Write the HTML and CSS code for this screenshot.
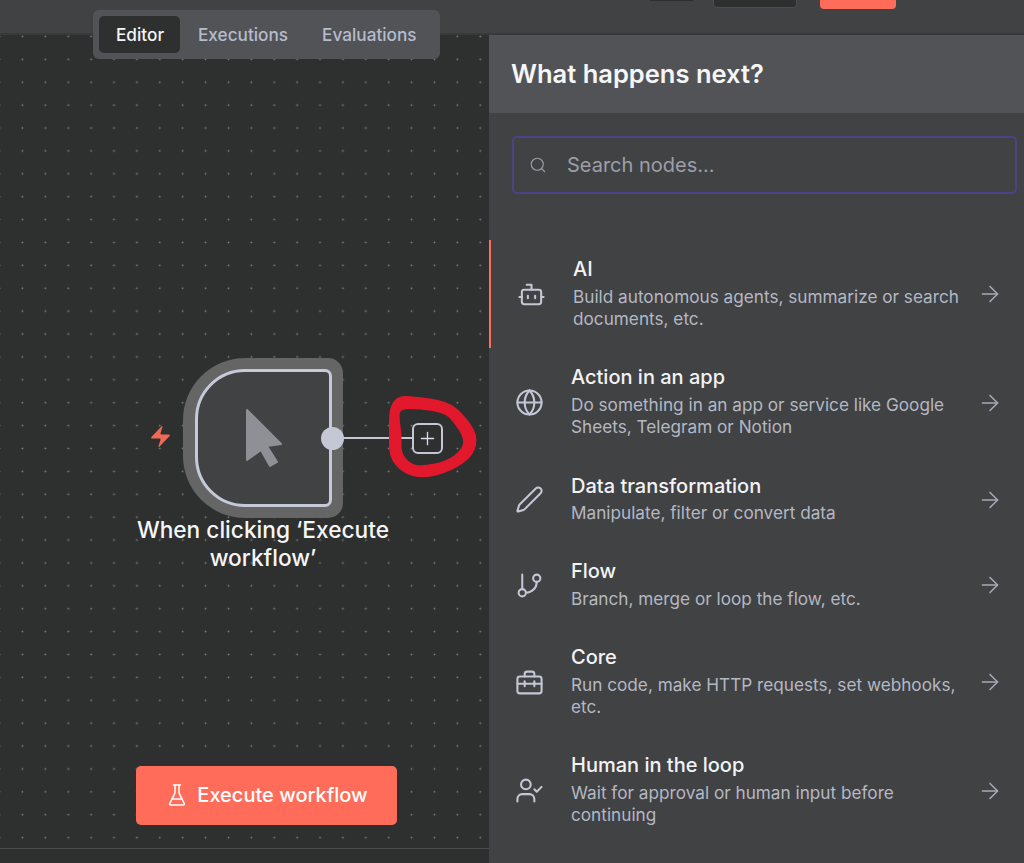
FILE: index.html
```html
<!DOCTYPE html>
<html lang="en">
<head>
    <meta charset="UTF-8">
    <meta name="viewport" content="width=device-width, initial-scale=1.0">
    <title>Workflow editor</title>
    <link rel="stylesheet" href="styles.css">
</head>
<body>
    <header class="topbar">
        <div class="topbar-actions">
            <span class="top-chip"></span>
            <span class="top-save"></span>
            <span class="top-publish"></span>
        </div>
    </header>

    <nav class="tabs">
        <span class="tab active">Editor</span>
        <span class="tab">Executions</span>
        <span class="tab">Evaluations</span>
    </nav>

    <main class="main">
        <section class="canvas-wrap">
            <div class="canvas">
                <svg class="wires" width="489" height="813" viewBox="0 35 489 813">
                    <path d="M332 438H413" class="wire"/>
                </svg>

                <svg class="trigger-bolt" viewBox="0 0 24 24">
                    <path d="M4 14a1 1 0 0 1-.78-1.63l9.9-10.2a.5.5 0 0 1 .86.46l-1.92 6.02A1 1 0 0 0 13 10h7a1 1 0 0 1 .78 1.63l-9.9 10.2a.5.5 0 0 1-.86-.46l1.92-6.02A1 1 0 0 0 11 14z"/>
                </svg>

                <div class="node-halo">
                    <div class="node">
                        <svg class="node-cursor" viewBox="0 0 36 58">
                            <path d="M1 1L35 35L21 37L31 53L24 57L15 41L1 51Z"/>
                        </svg>
                    </div>
                </div>
                <span class="node-port"></span>
                <span class="add-node">
                    <svg viewBox="0 0 24 24" class="icon"><path d="M5 12h14"/><path d="M12 5v14"/></svg>
                </span>
                <div class="node-label">When clicking ‘Execute workflow’</div>

                <!-- hand drawn red circle around the plus button -->
                <svg class="wires" width="489" height="813" viewBox="0 35 489 813">
                    <path class="scribble" fill-rule="evenodd" d="M405.5 397Q413 397 430 399.5Q447 402 455 408.5Q463 415 470 425Q477 435 475 445Q473 455 462.5 462.5Q452 470 437.5 474Q423 478 413 475Q403 472 396.5 464.5Q390 457 390 446Q390 435 390 421.5Q390 408 394 402.5Q398 397 405.5 397ZM410 408Q420 408 432.5 410Q445 412 450 417Q455 422 460 430Q465 438 464 444Q463 450 455 456Q447 462 435 464.5Q423 467 416.5 466Q410 465 405 459Q400 453 400.5 444Q401 435 399.5 426Q398 417 399 412.5Q400 408 410 408Z"/>
                </svg>

                <button class="execute-btn">
                    <svg viewBox="0 0 24 24" class="icon"><path d="M10 2v7.527a2 2 0 0 1-.211.896L4.72 20.55a1 1 0 0 0 .9 1.45h12.76a1 1 0 0 0 .9-1.45l-5.069-10.127A2 2 0 0 1 14 9.527V2"/><path d="M8.5 2h7"/><path d="M7 16h10"/></svg>
                    Execute workflow
                </button>
            </div>
            <div class="logs-bar"></div>
        </section>

        <aside class="panel">
            <div class="panel-head">What happens next?</div>
            <div class="search">
                <svg viewBox="0 0 24 24" class="icon search-icon"><path d="m21 21-4.34-4.34"/><circle cx="11" cy="11" r="8"/></svg>
                <span>Search nodes...</span>
            </div>

            <ul class="node-list">
                <li class="item selected">
                    <svg viewBox="0 0 24 24" class="icon item-icon"><path d="M12 8V4H8"/><rect width="16" height="12" x="4" y="8" rx="2"/><path d="M2 14h2"/><path d="M20 14h2"/><path d="M15 13v2"/><path d="M9 13v2"/></svg>
                    <div class="item-text">
                        <h4>AI</h4>
                        <p>Build autonomous agents, summarize or search documents, etc.</p>
                    </div>
                    <svg viewBox="0 0 24 24" class="icon item-arrow"><path d="M5 12h14"/><path d="m12 5 7 7-7 7"/></svg>
                </li>
                <li class="item">
                    <svg viewBox="0 0 24 24" class="icon item-icon"><circle cx="12" cy="12" r="10"/><path d="M12 2a14.5 14.5 0 0 0 0 20 14.5 14.5 0 0 0 0-20"/><path d="M2 12h20"/></svg>
                    <div class="item-text">
                        <h4>Action in an app</h4>
                        <p>Do something in an app or service like Google Sheets, Telegram or Notion</p>
                    </div>
                    <svg viewBox="0 0 24 24" class="icon item-arrow"><path d="M5 12h14"/><path d="m12 5 7 7-7 7"/></svg>
                </li>
                <li class="item">
                    <svg viewBox="0 0 24 24" class="icon item-icon"><path d="M21.174 6.812a1 1 0 0 0-3.986-3.987L3.842 16.174a2 2 0 0 0-.5.83l-1.321 4.352a.5.5 0 0 0 .623.622l4.353-1.32a2 2 0 0 0 .83-.497z"/></svg>
                    <div class="item-text">
                        <h4>Data transformation</h4>
                        <p>Manipulate, filter or convert data</p>
                    </div>
                    <svg viewBox="0 0 24 24" class="icon item-arrow"><path d="M5 12h14"/><path d="m12 5 7 7-7 7"/></svg>
                </li>
                <li class="item">
                    <svg viewBox="0 0 24 24" class="icon item-icon"><path d="M6 3v12"/><circle cx="18" cy="6" r="3"/><circle cx="6" cy="18" r="3"/><path d="M18 9a9 9 0 0 1-9 9"/></svg>
                    <div class="item-text">
                        <h4>Flow</h4>
                        <p>Branch, merge or loop the flow, etc.</p>
                    </div>
                    <svg viewBox="0 0 24 24" class="icon item-arrow"><path d="M5 12h14"/><path d="m12 5 7 7-7 7"/></svg>
                </li>
                <li class="item">
                    <svg viewBox="0 0 24 24" class="icon item-icon"><rect width="20" height="14" x="2" y="7" rx="2"/><path d="M8 7V5a2 2 0 0 1 2-2h4a2 2 0 0 1 2 2v2"/><path d="M2 13h20"/><path d="M8 11v4"/><path d="M16 11v4"/></svg>
                    <div class="item-text">
                        <h4>Core</h4>
                        <p>Run code, make HTTP requests, set webhooks, etc.</p>
                    </div>
                    <svg viewBox="0 0 24 24" class="icon item-arrow"><path d="M5 12h14"/><path d="m12 5 7 7-7 7"/></svg>
                </li>
                <li class="item">
                    <svg viewBox="0 0 24 24" class="icon item-icon"><path d="M16 21v-2a4 4 0 0 0-4-4H6a4 4 0 0 0-4 4v2"/><circle cx="9" cy="7" r="4"/><path d="m16 11 2 2 4-4"/></svg>
                    <div class="item-text">
                        <h4>Human in the loop</h4>
                        <p>Wait for approval or human input before continuing</p>
                    </div>
                    <svg viewBox="0 0 24 24" class="icon item-arrow"><path d="M5 12h14"/><path d="m12 5 7 7-7 7"/></svg>
                </li>
            </ul>
        </aside>
    </main>
</body>
</html>
```

FILE: styles.css
```css
* {
    box-sizing: border-box;
}
html, body {
    height: 100%;
}
body {
    margin: 0;
    display: flex;
    flex-direction: column;
    overflow: hidden;
    font-family: Inter, "Noto Sans", sans-serif;
    background-color: #414244;
    color: #f2f3f5;
}
.icon {
    fill: none;
    stroke: currentColor;
    stroke-width: 1.5;
    stroke-linecap: round;
    stroke-linejoin: round;
    flex: none;
}

/* top bar, mostly cropped off */
.topbar {
    height: 35px;
    flex: none;
    background-color: #414244;
    border-bottom: 2px solid #38393a;
}
.topbar-actions {
    display: flex;
    align-items: flex-start;
    padding-left: 650px;
}
.top-chip {
    width: 43px;
    height: 1px;
    background-color: #2e2f2f;
    margin-right: 20px;
}
.top-save {
    width: 84px;
    height: 8px;
    background-color: #2e2f2f;
    border: 1px solid #4c4d50;
    border-top: none;
    border-radius: 0 0 4px 4px;
    margin-right: 23px;
}
.top-publish {
    width: 76px;
    height: 9px;
    background-color: #ff6d5a;
    border-radius: 0 0 4px 4px;
}

.tabs {
    position: absolute;
    top: 10px;
    left: 93px;
    width: 347px;
    height: 49px;
    display: flex;
    align-items: center;
    padding: 0 6px;
    background-color: #525356;
    border-radius: 6px;
    z-index: 2;
}
.tab {
    height: 37px;
    line-height: 38px;
    padding: 0 17px;
    font-size: 17.2px;
    font-weight: 500;
    color: #b5bccb;
    border-radius: 5px;
}
.tab.active {
    width: 81px;
    color: #f5f6f8;
    background-color: #2e2f2f;
    margin-right: 1px;
}

.main {
    flex: 1;
    display: flex;
    min-height: 0;
}

/* canvas */
.canvas-wrap {
    width: 489px;
    flex: none;
    display: flex;
    flex-direction: column;
    background-color: #2e2f2f;
}
.canvas {
    position: relative;
    flex: 1;
    border-bottom: 1px solid #4a4b4d;
    background-image: radial-gradient(circle at center, #808183 0.8px, transparent 1.1px);
    background-size: 22.9px 22.9px;
    background-position: 11px -10px;
}
.logs-bar {
    height: 14px;
    flex: none;
}
.wires {
    position: absolute;
    top: 0;
    left: 0;
}
.wire {
    fill: none;
    stroke: #c4c8d4;
    stroke-width: 2;
}
.scribble {
    fill: #e2182d;
    stroke: #e2182d;
    stroke-width: 2;
    stroke-linejoin: round;
}
.trigger-bolt {
    position: absolute;
    left: 148px;
    top: 389px;
    width: 25px;
    height: 25px;
    fill: #ee6a58;
}
.node-halo {
    position: absolute;
    left: 183px;
    top: 323px;
    width: 160px;
    height: 160px;
    padding: 11px 11px 11px 12px;
    background-color: #656565;
    border-radius: 62px 15px 15px 62px;
}
.node {
    width: 137px;
    height: 138px;
    display: flex;
    align-items: center;
    justify-content: center;
    background-color: #414244;
    border: 3px solid #c6cad8;
    border-radius: 50px 7px 7px 50px;
}
.node-cursor {
    width: 36px;
    height: 58px;
    fill: #8f9096;
    stroke: #8f9096;
    stroke-width: 2;
    stroke-linejoin: round;
}
.node-port {
    position: absolute;
    left: 321px;
    top: 392px;
    width: 23px;
    height: 23px;
    border-radius: 50%;
    background-color: #c4c8d4;
}
.add-node {
    position: absolute;
    left: 412px;
    top: 388px;
    width: 31px;
    height: 31px;
    display: flex;
    align-items: center;
    justify-content: center;
    background-color: #2e2f2f;
    border: 2px solid #c4c8d4;
    border-radius: 6px;
    color: #d8dbe3;
}
.add-node svg {
    width: 21px;
    height: 21px;
}
.node-label {
    position: absolute;
    left: 130px;
    top: 481px;
    width: 266px;
    text-align: center;
    font-size: 22.7px;
    line-height: 28px;
    font-weight: 500;
    color: #f5f6f8;
}
.execute-btn {
    position: absolute;
    left: 136px;
    top: 731px;
    width: 261px;
    height: 59px;
    padding: 0 0 2px;
    display: flex;
    align-items: center;
    justify-content: center;
    gap: 8px;
    border: none;
    border-radius: 5px;
    background-color: #ff6d5a;
    color: #fff;
    font-family: inherit;
    font-size: 20px;
    font-weight: 500;
}
.execute-btn svg {
    width: 24px;
    height: 24px;
}

/* right side panel */
.panel {
    flex: 1;
    min-width: 0;
    background-color: #414244;
}
.panel-head {
    height: 78px;
    line-height: 78px;
    padding-left: 22px;
    font-size: 25.5px;
    font-weight: 600;
    color: #f5f6f8;
    background-color: #525356;
}
.search {
    margin: 23px 7px 46px 23px;
    height: 58px;
    display: flex;
    align-items: center;
    gap: 20px;
    padding-left: 15px;
    border: 2px solid #4b4288;
    border-radius: 5px;
    font-size: 20px;
    color: #9c9fa8;
}
.search-icon {
    width: 18px;
    height: 18px;
}
.node-list {
    list-style: none;
    margin: 0;
    padding: 0;
}
.item {
    display: flex;
    align-items: center;
    padding: 18px 21px 17.75px 26px;
}
.item.selected {
    border-left: 2px solid #ff6d5a;
}
.item-icon {
    width: 29px;
    height: 29px;
    color: #c4c8d4;
    margin-right: 27px;
    stroke-width: 1.7;
}
.item-text {
    flex: 1;
    min-width: 0;
}
.item h4 {
    margin: 0 0 4.5px;
    font-size: 20px;
    line-height: 23px;
    font-weight: 500;
    color: #f2f3f5;
}
.item p {
    margin: 0;
    font-size: 17.2px;
    line-height: 22.5px;
    color: #b4b8c3;
}
.item-arrow {
    width: 26px;
    height: 26px;
    margin-left: 11px;
    color: #a7abb6;
    stroke-width: 1.4;
}
```
